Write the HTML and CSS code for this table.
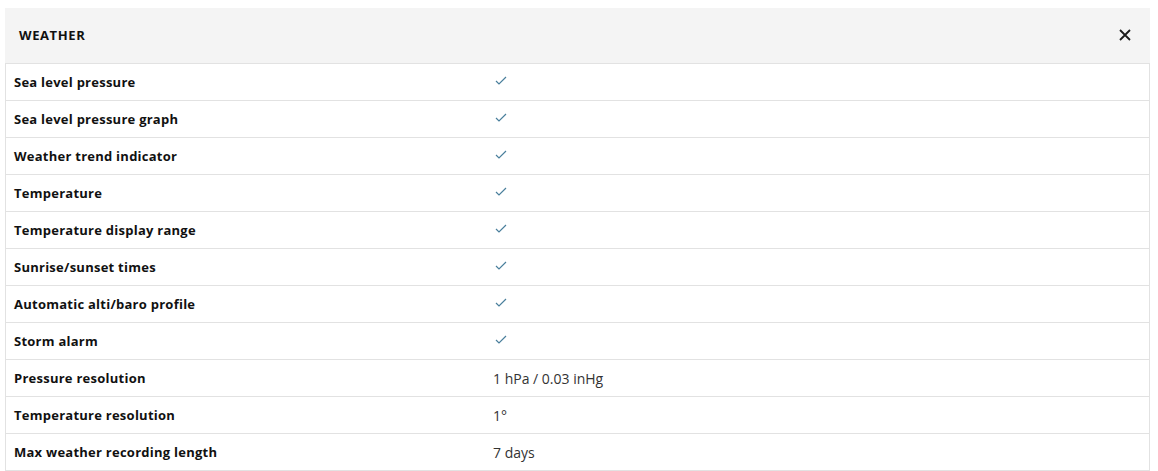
FILE: index.html
```html
<!DOCTYPE html>
<html lang="en">
<head>
<meta charset="utf-8">
<title>Weather</title>
<link rel="stylesheet" href="styles.css">
</head>
<body>
<section class="panel">
  <header class="panel-head">
    <h2 class="panel-title">WEATHER</h2>
    <button class="close" aria-label="Close">
      <svg width="12" height="12" viewBox="0 0 12 12"><path d="M1 1 L11 11 M11 1 L1 11" stroke="#1a1a1a" stroke-width="1.8" fill="none"/></svg>
    </button>
  </header>
  <div class="rows">
    <div class="row"><div class="label">Sea level pressure</div><div class="value"><svg class="check" width="12" height="9" viewBox="0 0 12 9"><path d="M1 5 L4 8 L11 1" stroke="#4a7f9c" stroke-width="1.2" fill="none"/></svg></div></div>
    <div class="row"><div class="label">Sea level pressure graph</div><div class="value"><svg class="check" width="12" height="9" viewBox="0 0 12 9"><path d="M1 5 L4 8 L11 1" stroke="#4a7f9c" stroke-width="1.2" fill="none"/></svg></div></div>
    <div class="row"><div class="label">Weather trend indicator</div><div class="value"><svg class="check" width="12" height="9" viewBox="0 0 12 9"><path d="M1 5 L4 8 L11 1" stroke="#4a7f9c" stroke-width="1.2" fill="none"/></svg></div></div>
    <div class="row"><div class="label">Temperature</div><div class="value"><svg class="check" width="12" height="9" viewBox="0 0 12 9"><path d="M1 5 L4 8 L11 1" stroke="#4a7f9c" stroke-width="1.2" fill="none"/></svg></div></div>
    <div class="row"><div class="label">Temperature display range</div><div class="value"><svg class="check" width="12" height="9" viewBox="0 0 12 9"><path d="M1 5 L4 8 L11 1" stroke="#4a7f9c" stroke-width="1.2" fill="none"/></svg></div></div>
    <div class="row"><div class="label">Sunrise/sunset times</div><div class="value"><svg class="check" width="12" height="9" viewBox="0 0 12 9"><path d="M1 5 L4 8 L11 1" stroke="#4a7f9c" stroke-width="1.2" fill="none"/></svg></div></div>
    <div class="row"><div class="label">Automatic alti/baro profile</div><div class="value"><svg class="check" width="12" height="9" viewBox="0 0 12 9"><path d="M1 5 L4 8 L11 1" stroke="#4a7f9c" stroke-width="1.2" fill="none"/></svg></div></div>
    <div class="row"><div class="label">Storm alarm</div><div class="value"><svg class="check" width="12" height="9" viewBox="0 0 12 9"><path d="M1 5 L4 8 L11 1" stroke="#4a7f9c" stroke-width="1.2" fill="none"/></svg></div></div>
    <div class="row"><div class="label">Pressure resolution</div><div class="value">1 hPa / 0.03 inHg</div></div>
    <div class="row"><div class="label">Temperature resolution</div><div class="value">1°</div></div>
    <div class="row"><div class="label">Max weather recording length</div><div class="value">7 days</div></div>
  </div>
</section>
</body>
</html>
```

FILE: styles.css
```css
* { box-sizing: border-box; }
html, body { margin: 0; padding: 0; background: #fff; }
body {
  padding: 8px 8px 0 5px;
  font-family: "Open Sans", "Liberation Sans", sans-serif;
  color: #111;
}
.panel { width: 1145px; }
.panel-head {
  height: 56px;
  background: #f4f4f4;
  display: flex;
  align-items: center;
  justify-content: space-between;
  padding: 0 19px 1px 14px;
  border-bottom: 1px solid #e2e2e2;
}
.panel-title {
  margin: 0;
  font-size: 13px;
  font-weight: 700;
  letter-spacing: 0.6px;
  color: #111;
}
.close {
  border: 0;
  background: transparent;
  padding: 0;
  width: 12px;
  height: 12px;
  display: flex;
  cursor: pointer;
}
.rows {
  border-left: 1px solid #e2e2e2;
  border-right: 1px solid #e2e2e2;
}
.row {
  display: grid;
  grid-template-columns: 479px 1fr;
  height: 37px;
  align-items: center;
  border-bottom: 1px solid #e2e2e2;
  font-size: 13px;
}
.label {
  padding-left: 8px;
  font-weight: 700;
  letter-spacing: 0.25px;
  color: #111;
}
.value {
  padding-left: 8px;
  font-size: 14px;
  font-weight: 400;
  color: #333;
  display: flex;
  align-items: center;
}
.check { margin-left: 2px; margin-top: -4px; }
```
